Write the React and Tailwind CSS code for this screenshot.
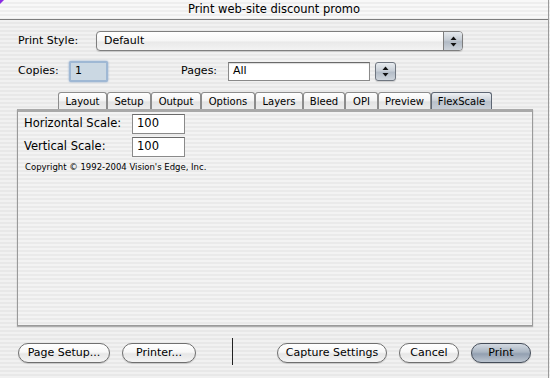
import React from "react";

const Arrows = () => (
  <svg width="7" height="11" viewBox="0 0 7 11">
    <path d="M3.5 0.5 L6.5 4 L0.5 4 Z" fill="#111" />
    <path d="M0.5 7 L6.5 7 L3.5 10.5 Z" fill="#111" />
  </svg>
);

const Tab = ({ label, w, selected }) => (
  <div
    className={
      "h-[17px] flex items-center justify-center border border-b-0 rounded-t-[3px] text-[10px] " +
      (selected
        ? "border-[#5d6673] bg-[linear-gradient(180deg,#eef1f4_0%,#cdd3da_45%,#b9c1cb_55%,#c8ced6_100%)]"
        : "border-[#8c8c8c] bg-[linear-gradient(180deg,#ffffff_0%,#f3f3f3_50%,#e3e3e3_55%,#ececec_100%)]")
    }
    style={{ width: w }}
  >
    {label}
  </div>
);

const Btn = ({ label, w, def }) => (
  <div
    className={
      "h-[20px] rounded-full flex items-center justify-center text-[11px] border shadow-[0_1px_1px_rgba(0,0,0,0.15)] " +
      (def
        ? "border-[#454d59] bg-[linear-gradient(180deg,#d3dae2_0%,#aab5c2_45%,#93a0b1_55%,#bcc5d0_100%)]"
        : "border-[#6f6f6f] bg-[linear-gradient(180deg,#ffffff_0%,#f7f7f7_45%,#e6e6e6_55%,#f4f4f4_100%)]")
    }
    style={{ width: w }}
  >
    {label}
  </div>
);

export default function App() {
  return (
    <div className="w-[550px] h-[378px] relative overflow-hidden text-black font-['DejaVu_Sans',sans-serif] text-[11px] bg-[repeating-linear-gradient(180deg,#f1f1f1_0px,#f1f1f1_2px,#e8e8e8_2px,#e8e8e8_4px)]">
      <svg className="absolute left-0 top-0" width="4" height="4" viewBox="0 0 4 4">
        <path d="M0 0 L4 0 L0 4 Z" fill="#8a2be2" />
      </svg>
      <div className="absolute right-[1px] top-0 h-full w-px bg-[#9a9a9a]" />
      {/* title bar */}
      <div className="h-[20px] flex items-center justify-center border-b border-[#7d7d7d] bg-[repeating-linear-gradient(180deg,#f8f8f8_0px,#f8f8f8_2px,#eeeeee_2px,#eeeeee_4px)] text-[11.5px] mr-[2px]">
        Print web-site discount promo
      </div>

      {/* row 1 */}
      <div className="flex items-center mt-[11px] h-[20px] pl-[18px]">
        <span className="w-[78px]">Print Style:</span>
        <div className="w-[367px] h-[20px] flex items-center rounded-[4px] border border-[#7e7e7e] bg-[linear-gradient(180deg,#ffffff_0%,#f6f6f6_50%,#e9e9e9_55%,#f3f3f3_100%)] shadow-[0_1px_1px_rgba(0,0,0,0.15)] overflow-hidden">
          <span className="flex-1 pl-[7px]">Default</span>
          <div className="w-[19px] h-full flex items-center justify-center border-l border-[#7e7e7e] bg-[linear-gradient(180deg,#e6eaee_0%,#c5ccd4_45%,#b1bac5_55%,#cdd3da_100%)]">
            <Arrows />
          </div>
        </div>
      </div>

      {/* row 2 */}
      <div className="flex items-center mt-[10px] h-[20px] pl-[18px]">
        <span className="w-[51px]">Copies:</span>
        <div className="w-[39px] h-[21px] rounded-[2px] border-2 border-[#9fb8d4] bg-[#cbd8e3] flex items-center pl-[4px] shadow-[0_0_2px_#7f9fc8]">
          1
        </div>
        <span className="ml-[73px] w-[47px]">Pages:</span>
        <div className="w-[142px] h-[19px] border border-[#8a8a8a] border-t-[#6a6a6a] bg-white flex items-center pl-[4px] shadow-[inset_0_1px_1px_rgba(0,0,0,0.15)]">
          All
        </div>
        <div className="ml-[5px] w-[21px] h-[19px] rounded-[3px] border border-[#6f7680] flex items-center justify-center bg-[linear-gradient(180deg,#e8ecf0_0%,#c9d0d8_45%,#b4bdc8_55%,#cfd5dc_100%)] shadow-[0_1px_1px_rgba(0,0,0,0.15)]">
          <Arrows />
        </div>
      </div>

      {/* tabs */}
      <div className="flex mt-[11px] pl-[58px] h-[17px]">
        <Tab label="Layout" w={49} />
        <Tab label="Setup" w={44} />
        <Tab label="Output" w={50} />
        <Tab label="Options" w={54} />
        <Tab label="Layers" w={48} />
        <Tab label="Bleed" w={42} />
        <Tab label="OPI" w={33} />
        <Tab label="Preview" w={53} />
        <Tab label="FlexScale" w={61} selected />
      </div>

      {/* panel */}
      <div className="ml-[17px] w-[516px] h-[217px] border border-[#9a9a9a] border-t-[3px] border-t-[#a9a9a9] shadow-[0_1px_1px_rgba(0,0,0,0.25)] pl-[6px] pt-[2px] bg-[repeating-linear-gradient(180deg,#f3f3f3_0px,#f3f3f3_2px,#eaeaea_2px,#eaeaea_4px)]">
        <div className="flex items-center h-[20px]">
          <span className="w-[108px] text-[11.5px]">Horizontal Scale:</span>
          <div className="w-[53px] h-[20px] border border-[#8a8a8a] border-t-[#6a6a6a] bg-white flex items-center pl-[4px] text-[11.5px]">
            100
          </div>
        </div>
        <div className="flex items-center h-[20px] mt-[3px]">
          <span className="w-[108px] text-[11.5px]">Vertical Scale:</span>
          <div className="w-[53px] h-[20px] border border-[#8a8a8a] border-t-[#6a6a6a] bg-white flex items-center pl-[4px] text-[11.5px]">
            100
          </div>
        </div>
        <div className="mt-[4px] pl-[1px] text-[8.5px]">Copyright © 1992-2004 Vision's Edge, Inc.</div>
      </div>

      {/* bottom buttons */}
      <div className="flex items-center mt-[17px] h-[20px] pl-[18px]">
        <Btn label="Page Setup..." w={92} />
        <div className="ml-[12px]">
          <Btn label="Printer..." w={74} />
        </div>
        <div className="ml-[36px] w-px h-[27px] bg-[#222] self-start -mt-[5px]" />
        <div className="ml-[44px]">
          <Btn label="Capture Settings" w={110} />
        </div>
        <div className="ml-[12px]">
          <Btn label="Cancel" w={60} />
        </div>
        <div className="ml-[12px]">
          <Btn label="Print" w={60} def />
        </div>
      </div>
    </div>
  );
}
